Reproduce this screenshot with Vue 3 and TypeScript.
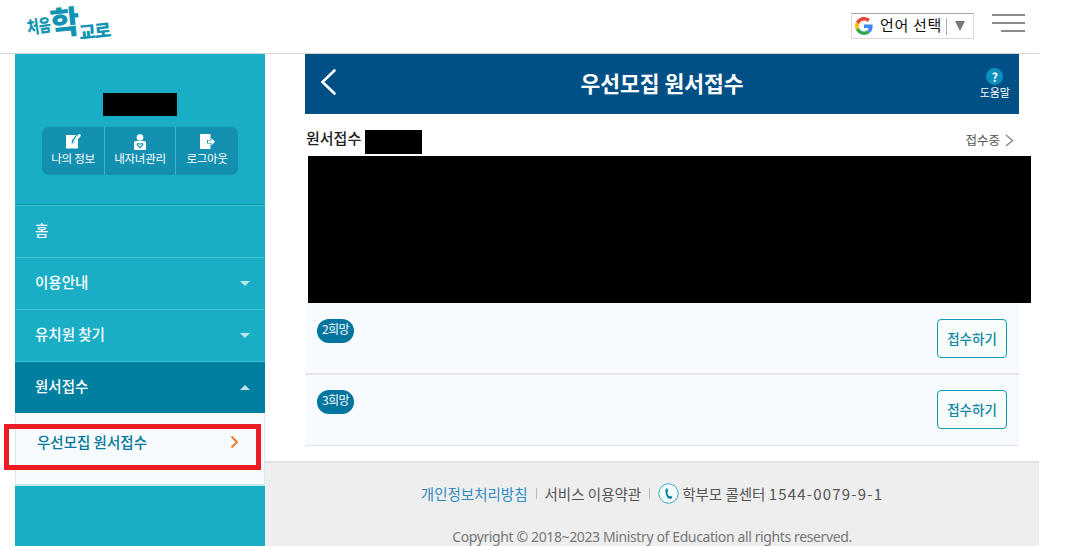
<script setup lang="ts">
const profileLinks = [
  { label: '나의 정보', icon: 'edit' },
  { label: '내자녀관리', icon: 'child' },
  { label: '로그아웃', icon: 'logout' }
];

const navItems = [
  { label: '홈', arrow: '' },
  { label: '이용안내', arrow: 'down' },
  { label: '유치원 찾기', arrow: 'down' },
  { label: '원서접수', arrow: 'up', active: true }
];

const wishes = ['2희망', '3희망'];
</script>

<template>
  <div class="page">
    <header class="topbar">
      <div class="logo">
        <span class="logo-small">처음</span><span class="logo-big">학</span><span class="logo-mid">교로</span>
      </div>
      <div class="top-right">
        <div class="translate">
          <svg class="g-icon" width="18" height="18" viewBox="0 0 48 48">
            <path fill="#ea4335" d="M24 9.5c3.5 0 6.700 1.300 9.100 3.500l6.800-6.800C35.800 2.400 30.300 0 24 0 14.600 0 6.500 5.400 2.600 13.200l7.900 6.100C12.400 13.600 17.700 9.500 24 9.500z" />
            <path fill="#4285f4" d="M47 24.500c0-1.600-.1-3.100-.4-4.500H24v9h12.900c-.6 3-2.200 5.500-4.700 7.200l7.700 6c4.400-4.100 7.100-10.200 7.100-17.700z" />
            <path fill="#fbbc05" d="M10.500 28.700c-.5-1.500-.8-3-.8-4.700s.3-3.200.8-4.700l-7.900-6.100C1 16.500 0 20.100 0 24s1 7.500 2.600 10.800l7.900-6.100z" />
            <path fill="#34a853" d="M24 48c6.300 0 11.800-2.100 15.700-5.800l-7.700-6c-2.100 1.400-4.800 2.300-8 2.300-6.300 0-11.600-4.100-13.500-9.800l-7.900 6.100C6.500 42.600 14.600 48 24 48z" />
          </svg>
          <span class="translate-label">언어 선택</span>
          <span class="translate-sep"></span>
          <span class="translate-arrow"></span>
        </div>
        <button class="hamburger" aria-label="메뉴">
          <span></span><span></span><span class="short"></span>
        </button>
      </div>
    </header>

    <div class="layout">
      <aside class="sidebar">
        <div class="profile">
          <div class="redact-name"></div>
          <div class="profile-links">
            <a v-for="link in profileLinks" :key="link.label" class="profile-link">
              <svg width="18" height="16" viewBox="0 0 18 16">
                <template v-if="link.icon === 'edit'">
                  <path fill="#fff" d="M2 1h10L8 6.500 7.500 9.500 10.500 9 14 5v9.500H2z" />
                  <path fill="#fff" d="M13 1.500 15.500 0 17 1 16 3 11 8.500 9 9 9.500 7z" />
                </template>
                <template v-else-if="link.icon === 'child'">
                  <circle cx="9" cy="3.500" r="3.300" fill="#fff" />
                  <path fill="#fff" d="M3 8.500Q3 7 5 7h8q2 0 2 1.500V16H3z" />
                  <path fill="#1390b0" d="M9 14.500 5.800 11.300Q5 9.500 6.800 9 8.200 8.800 9 10 9.800 8.800 11.200 9 13 9.500 12.200 11.300z" />
                  <path fill="#fff" d="M9 12.800 7.200 11q-.3-.8.400-.9.700 0 1.400 1 .7-1 1.400-1 .7.100.4.900z" />
                </template>
                <template v-else>
                  <path fill="#fff" d="M2 0h10.500v6H9v3.500h3.500V15H2z" />
                  <path fill="#fff" d="M10 6.500h3.500V4l3.500 3.700-3.500 3.800V9H10z" />
                </template>
              </svg>
              <span>{{ link.label }}</span>
            </a>
          </div>
        </div>

        <nav class="nav">
          <a v-for="item in navItems" :key="item.label" class="nav-item" :class="{ active: item.active }">
            <span class="nav-label">{{ item.label }}</span>
            <i v-if="item.arrow" class="caret" :class="item.arrow"></i>
          </a>
        </nav>

        <div class="submenu">
          <a class="sub-item">
            <span>우선모집 원서접수</span>
            <svg width="9" height="14" viewBox="0 0 9 14">
              <path d="M1.500 1.500 7 7l-5.500 5.500" fill="none" stroke="#f47b2a" stroke-width="2" />
            </svg>
          </a>
        </div>
      </aside>

      <main class="content">
        <div class="section">
          <div class="titlebar">
            <svg class="back" width="18" height="28" viewBox="0 0 18 28">
              <path d="M15.500 2.500 3.500 14l12 11.500" fill="none" stroke="#fff" stroke-width="2.600" stroke-linecap="round" />
            </svg>
            <h1>우선모집 원서접수</h1>
            <div class="help">
              <span class="help-mark">?</span>
              <span>도움말</span>
            </div>
          </div>

          <div class="apply-head">
            <div class="apply-name">
              <strong>원서접수</strong>
              <span class="redact-kid"></span>
            </div>
            <div class="apply-state">
              <span>접수중</span>
              <svg width="9" height="13" viewBox="0 0 9 13">
                <path d="M1 1l6.500 5.500L1 12" fill="none" stroke="#8a8a8a" stroke-width="1.500" />
              </svg>
            </div>
          </div>

          <div class="redact-block"></div>

          <div v-for="wish in wishes" :key="wish" class="wish-row">
            <span class="wish-badge">{{ wish }}</span>
            <button class="apply-btn">접수하기</button>
          </div>
        </div>

        <footer class="footer">
          <div class="footer-links">
            <a class="privacy">개인정보처리방침</a>
            <i class="bar"></i>
            <a>서비스 이용약관</a>
            <i class="bar"></i>
            <svg width="21" height="21" viewBox="0 0 21 21">
              <circle cx="10.500" cy="10.500" r="9.700" fill="#f4fbfc" stroke="#3aa9c0" stroke-width="1" />
              <path fill="#007fa0" d="M9.200 5.200 7.800 5.800Q6.500 10.500 9.800 15.200 11.500 16 13.800 15.400L14.300 13.800 12 12.800 11 13.600Q9.300 11.500 9.300 9L10.300 8.200z" />
            </svg>
            <span class="call">학부모 콜센터 <span class="call-number">1544-0079-9-1</span></span>
          </div>
          <p class="copyright">Copyright © 2018~2023 Ministry of Education all rights reserved.</p>
        </footer>
      </main>
    </div>

    <div class="annotation"></div>
  </div>
</template>

<style scoped>
.page {
  position: relative;
  width: 1068px;
  height: 546px;
  overflow: hidden;
  background: #fff;
  font-family: "Noto Sans CJK KR", "Noto Sans", sans-serif;
  color: #333;
}

.topbar {
  width: 1039px;
  height: 53px;
  box-sizing: content-box;
  border-bottom: 1px solid #d5d5d5;
  display: flex;
  align-items: flex-start;
  justify-content: space-between;
}

.logo {
  margin: 4px 0 0 27px;
  color: #1194b4;
  font-weight: 900;
  display: flex;
  align-items: flex-end;
  line-height: 1;
  height: 38px;
  white-space: nowrap;
}

.logo-small {
  font-size: 13px;
  line-height: 1.3;
  margin: 0 -1px 7px 0;
  transform: rotate(-8deg) scaleY(1.35);
}

.logo-big {
  font-size: 32px;
  line-height: 1.2;
  margin: 0 0 3px 0;
  transform: rotate(-6deg);
}

.logo-mid {
  font-size: 18px;
  line-height: 1.3;
  letter-spacing: -1px;
  transform: rotate(-6deg);
}

.top-right {
  display: flex;
  align-items: flex-start;
  margin-top: 13px;
  margin-right: 14px;
  gap: 18px;
}

.translate {
  width: 118px;
  height: 24px;
  border: 1px solid #d8d8d8;
  border-top-color: #a8a8a8;
  display: flex;
  align-items: center;
  padding-left: 3px;
  box-sizing: content-box;
}

.translate-label {
  margin: 0 0 4px 7px;
  font-size: 15px;
  color: #111;
  letter-spacing: 0.7px;
  white-space: nowrap;
}

.translate-sep {
  width: 1px;
  height: 17px;
  background: #aaa;
  margin-left: 4px;
}

.translate-arrow {
  width: 0;
  height: 0;
  margin-left: 8px;
  border-left: 5px solid transparent;
  border-right: 5px solid transparent;
  border-top: 10px solid #777;
}

.hamburger {
  width: 33px;
  padding: 0;
  margin-top: 1px;
  border: none;
  background: none;
  display: flex;
  flex-direction: column;
  align-items: flex-end;
  gap: 6px;
}

.hamburger span {
  display: block;
  width: 33px;
  height: 2px;
  background: #8a8a8a;
}

.hamburger .short {
  width: 24px;
}

.layout {
  display: flex;
  width: 1039px;
  padding-left: 15px;
  box-sizing: border-box;
}

.sidebar {
  width: 250px;
  height: 492px;
  flex-shrink: 0;
  background: #1aaec6;
}

.profile {
  height: 151px;
  padding-top: 39px;
  box-sizing: border-box;
  display: flex;
  flex-direction: column;
  align-items: center;
  border-bottom: 1px solid #1191a8;
}

.redact-name {
  width: 74px;
  height: 23px;
  background: #000;
}

.profile-links {
  display: grid;
  grid-template-columns: 62px 71px 63px;
  width: 196px;
  height: 48px;
  margin-top: 11px;
  border-radius: 7px;
  overflow: hidden;
  background: #1390b0;
}

.profile-link {
  display: flex;
  flex-direction: column;
  align-items: center;
  padding-top: 7px;
  box-sizing: border-box;
  color: #fff;
  font-size: 11.5px;
  line-height: 16px;
  letter-spacing: -0.3px;
  white-space: nowrap;
}

.profile-link + .profile-link {
  border-left: 1px solid #35b7cc;
}

.nav {
  border-top: 1px solid #3cc0d4;
}

.nav-item {
  height: 51px;
  padding: 0 15px 0 20px;
  display: flex;
  align-items: center;
  justify-content: space-between;
  color: #fff;
  font-size: 14.5px;
  font-weight: 500;
  border-bottom: 1px solid #3cc0d4;
}

.nav-label {
  margin-bottom: 4px;
}

.nav-item.active {
  background: #007fa0;
  border-bottom: none;
}

.caret {
  width: 0;
  height: 0;
  border-left: 5px solid transparent;
  border-right: 5px solid transparent;
}

.caret.down {
  border-top: 5px solid #bfe6ee;
}

.caret.up {
  border-bottom: 5px solid #bfe6ee;
}

.submenu {
  height: 73px;
  box-sizing: border-box;
  padding-top: 17px;
  background: #f7fbff;
  border: 1px solid #d5ebe9;
  border-top: none;
  border-bottom: 2px solid #c4e6e6;
}

.sub-item {
  display: flex;
  align-items: center;
  justify-content: space-between;
  padding: 0 25px 0 21px;
  color: #00789a;
  font-size: 14.5px;
  font-weight: 500;
  line-height: 24px;
}

.content {
  flex: 1;
  min-width: 0;
  display: flex;
  flex-direction: column;
  height: 492px;
}

.section {
  width: 714px;
  margin-left: 40px;
}

.titlebar {
  height: 60px;
  background: #005086;
  color: #fff;
  display: flex;
  align-items: center;
  justify-content: center;
  position: relative;
}

.titlebar h1 {
  margin: 0 0 4px;
  font-size: 21.500px;
  font-weight: 700;
}

.back {
  position: absolute;
  left: 14px;
  top: 14px;
}

.help {
  position: absolute;
  right: 9px;
  top: 14px;
  display: flex;
  flex-direction: column;
  align-items: center;
  font-size: 11px;
  line-height: 15px;
}

.help-mark {
  width: 17px;
  height: 17px;
  border-radius: 50%;
  background: #0d8fc0;
  font-size: 12px;
  font-weight: 700;
  line-height: 17px;
  text-align: center;
}

.apply-head {
  height: 42px;
  display: flex;
  align-items: flex-start;
  justify-content: space-between;
}

.apply-name {
  display: flex;
  align-items: flex-start;
  padding: 14px 0 0 1px;
  font-size: 15px;
  line-height: 20px;
  color: #222;
}

.apply-name strong {
  font-weight: 500;
}

.redact-kid {
  width: 57px;
  height: 24px;
  margin: 2px 0 0 4px;
  background: #000;
}

.apply-state {
  display: flex;
  align-items: center;
  gap: 5px;
  padding: 16px 5px 0 0;
  font-size: 12.500px;
  line-height: 20px;
  color: #555;
}

.redact-block {
  width: 723px;
  height: 147px;
  margin-left: 3px;
  background: #000;
}

.wish-row {
  height: 72px;
  box-sizing: border-box;
  padding: 16px 12px 0 12px;
  background: #f7fbff;
  display: flex;
  align-items: flex-start;
  justify-content: space-between;
  border-bottom: 2px solid #e5e5e5;
}

.wish-row:last-child {
  height: 71px;
  padding-top: 15px;
  border-bottom-width: 1px;
}

.wish-badge {
  width: 37px;
  height: 24px;
  border-radius: 12px;
  background: #00769f;
  color: #fff;
  font-size: 12px;
  line-height: 20px;
  text-align: center;
  letter-spacing: -0.5px;
  white-space: nowrap;
}

.apply-btn {
  width: 70px;
  height: 39px;
  padding: 0 0 2px;
  border: 1px solid #0f9db8;
  border-radius: 4px;
  background: #f6fdfb;
  color: #1587a3;
  font-family: inherit;
  font-size: 13.500px;
  font-weight: 500;
  white-space: nowrap;
}

.footer {
  margin-top: 15px;
  flex: 1;
  background: #eee;
  border-top: 2px solid #e2e2e2;
  text-align: center;
}

.footer-links {
  margin-top: 19px;
  display: flex;
  align-items: center;
  justify-content: center;
  height: 22px;
  font-size: 14.500px;
  color: #555;
}

.privacy {
  color: #2e8bc4;
}

.bar {
  width: 1px;
  height: 11px;
  margin: 0 8px;
  background: #bbb;
}

.call {
  margin-left: 3px;
}

.call-number {
  font-size: 15px;
  letter-spacing: 1.2px;
}

.copyright {
  margin: 24px 0 0;
  font-size: 14px;
  line-height: 18px;
  color: #777;
  letter-spacing: -0.38px;
  font-family: "Noto Sans", sans-serif;
}

.annotation {
  position: absolute;
  left: 4px;
  top: 424px;
  width: 257px;
  height: 46px;
  box-sizing: border-box;
  border: 5px solid #ed1c24;
}
</style>

<style>
html,
body {
  margin: 0;
  overflow: hidden;
}
</style>
